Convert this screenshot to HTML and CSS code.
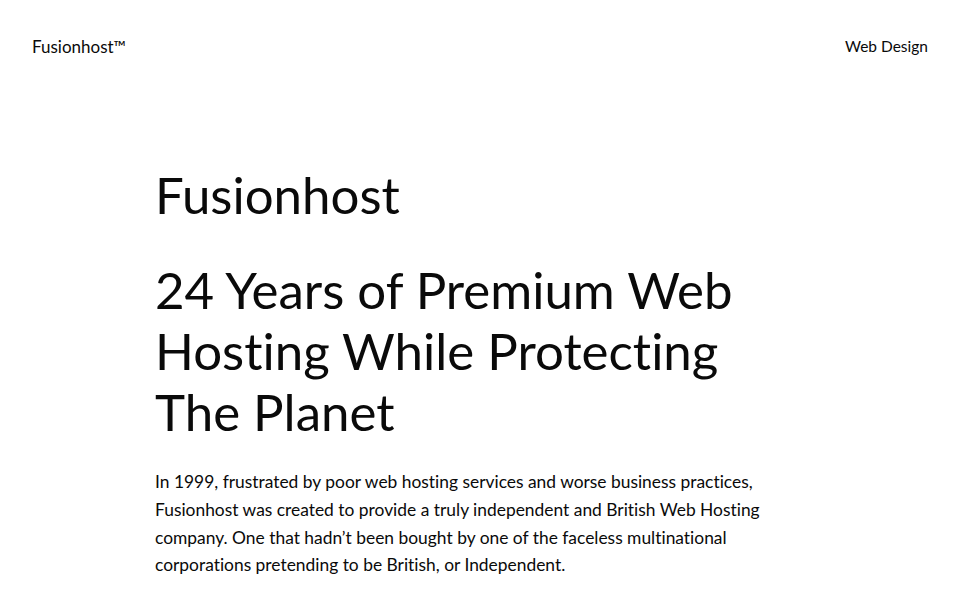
FILE: index.html
```html
<!DOCTYPE html>
<html lang="en">
<head>
<meta charset="utf-8">
<title>Fusionhost</title>
<link rel="stylesheet" href="styles.css">
</head>
<body>
<header class="site-header">
  <a class="brand" href="#">Fusionhost™</a>
  <nav class="nav"><a href="#">Web Design</a></nav>
</header>
<main class="content">
  <h1 class="title">Fusionhost</h1>
  <h2 class="headline">24 Years of Premium Web Hosting While Protecting The Planet</h2>
  <p class="intro">In 1999, frustrated by poor web hosting services and worse business practices, Fusionhost was created to provide a truly independent and British Web Hosting company. One that hadn’t been bought by one of the faceless multinational corporations pretending to be British, or Independent.</p>
</main>
</body>
</html>
```
FILE: styles.css
```css
html, body { margin: 0; padding: 0; background: #fff; }
body {
  font-family: Lato, "Noto Sans", sans-serif;
  color: #0a0a0a;
  font-variant-ligatures: none;
  font-feature-settings: "liga" 0, "dlig" 0;
}
a { color: inherit; text-decoration: none; }
.site-header {
  display: flex;
  justify-content: space-between;
  align-items: center;
  padding: 35px 32px 0;
  height: 22px;
}
.brand { font-size: 17px; }
.nav { font-size: 15.5px; }
.content {
  max-width: 650px;
  margin: 0 auto;
  padding-top: 107px;
}
.title {
  font-weight: 400;
  font-size: 51px;
  line-height: 1.2;
  margin: 0 0 34px;
}
.headline {
  font-weight: 400;
  font-size: 51px;
  line-height: 61px;
  margin: 0 0 26px;
}
.intro {
  font-size: 17.4px;
  line-height: 27.7px;
  margin: 0;
}
```
